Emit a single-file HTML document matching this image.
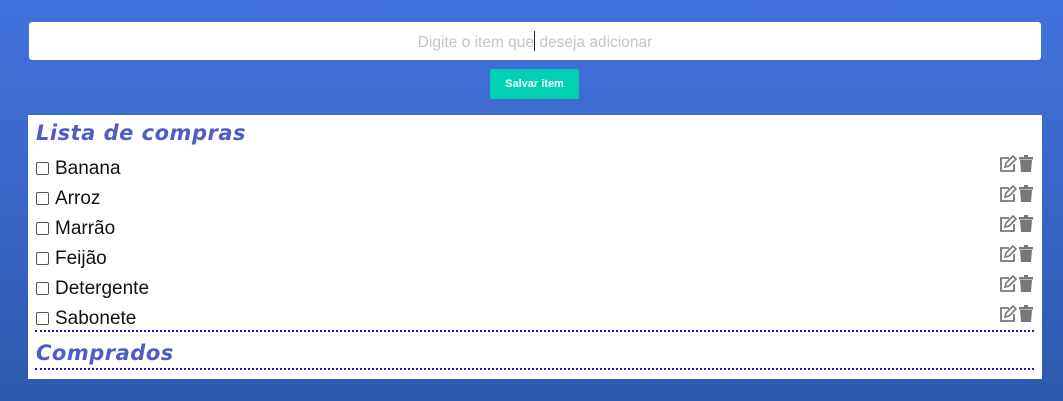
<!DOCTYPE html>
<html><head><style>
body{margin:0;width:1063px;height:401px;overflow:hidden;background:linear-gradient(#4472de,#2d59ac);font-family:"Liberation Sans",sans-serif;position:relative}
.inp{position:absolute;left:29px;top:22px;width:1012px;height:38px;background:#fff;border-radius:3px;text-align:center;line-height:42px;font-size:15.5px;color:#c9c2c8}
.btn{position:absolute;left:490px;top:69px;width:89px;height:30px;background:#00d1b2;border-radius:2px;color:#fff;font-weight:bold;font-size:11px;text-align:center;line-height:31px}
.panel{position:absolute;left:28px;top:115px;width:1014px;height:264px;background:#fff}
h2{position:absolute;left:8px;margin:0;font-family:"DejaVu Sans",sans-serif;font-style:italic;font-weight:bold;color:#4d5cc6;font-size:21px;letter-spacing:0.5px}
.row{position:absolute;left:8px;height:30px;width:998px;font-size:19px;color:#111;line-height:30px}
.cb{display:inline-block;width:11px;height:11px;border:1px solid #555;border-radius:2px;vertical-align:-1px;margin-right:6px}
.ic{position:absolute;right:0;top:1px}
.line{position:absolute;left:7px;width:999px;border-top:2px dotted #1515e0}
</style></head><body>
<div class="inp">Digite o item que<span style="display:inline-block;width:1px;height:20px;background:#222;vertical-align:-4px"></span> deseja adicionar</div>
<div class="btn">Salvar item</div>
<div class="panel">
<h2 style="top:6px">Lista de compras</h2>
<div class="row" style="top:39px"><span class="cb"></span>Banana<svg class="ic" width="36" height="18" viewBox="0 0 36 18"><path d="M11 3H3v13h13V9" fill="none" stroke="#777" stroke-width="1.8"/><path d="M7 12l1-4 7-7 3 3-7 7z" fill="none" stroke="#777" stroke-width="1.6"/><rect x="21" y="2" width="14" height="2.5" fill="#777"/><rect x="26" y="0" width="4" height="2" fill="#777"/><path d="M22 5h12l-1 12H23z" fill="#777"/></svg></div>
<div class="row" style="top:69px"><span class="cb"></span>Arroz<svg class="ic" width="36" height="18" viewBox="0 0 36 18"><path d="M11 3H3v13h13V9" fill="none" stroke="#777" stroke-width="1.8"/><path d="M7 12l1-4 7-7 3 3-7 7z" fill="none" stroke="#777" stroke-width="1.6"/><rect x="21" y="2" width="14" height="2.5" fill="#777"/><rect x="26" y="0" width="4" height="2" fill="#777"/><path d="M22 5h12l-1 12H23z" fill="#777"/></svg></div>
<div class="row" style="top:99px"><span class="cb"></span>Marrão<svg class="ic" width="36" height="18" viewBox="0 0 36 18"><path d="M11 3H3v13h13V9" fill="none" stroke="#777" stroke-width="1.8"/><path d="M7 12l1-4 7-7 3 3-7 7z" fill="none" stroke="#777" stroke-width="1.6"/><rect x="21" y="2" width="14" height="2.5" fill="#777"/><rect x="26" y="0" width="4" height="2" fill="#777"/><path d="M22 5h12l-1 12H23z" fill="#777"/></svg></div>
<div class="row" style="top:129px"><span class="cb"></span>Feijão<svg class="ic" width="36" height="18" viewBox="0 0 36 18"><path d="M11 3H3v13h13V9" fill="none" stroke="#777" stroke-width="1.8"/><path d="M7 12l1-4 7-7 3 3-7 7z" fill="none" stroke="#777" stroke-width="1.6"/><rect x="21" y="2" width="14" height="2.5" fill="#777"/><rect x="26" y="0" width="4" height="2" fill="#777"/><path d="M22 5h12l-1 12H23z" fill="#777"/></svg></div>
<div class="row" style="top:159px"><span class="cb"></span>Detergente<svg class="ic" width="36" height="18" viewBox="0 0 36 18"><path d="M11 3H3v13h13V9" fill="none" stroke="#777" stroke-width="1.8"/><path d="M7 12l1-4 7-7 3 3-7 7z" fill="none" stroke="#777" stroke-width="1.6"/><rect x="21" y="2" width="14" height="2.5" fill="#777"/><rect x="26" y="0" width="4" height="2" fill="#777"/><path d="M22 5h12l-1 12H23z" fill="#777"/></svg></div>
<div class="row" style="top:189px"><span class="cb"></span>Sabonete<svg class="ic" width="36" height="18" viewBox="0 0 36 18"><path d="M11 3H3v13h13V9" fill="none" stroke="#777" stroke-width="1.8"/><path d="M7 12l1-4 7-7 3 3-7 7z" fill="none" stroke="#777" stroke-width="1.6"/><rect x="21" y="2" width="14" height="2.5" fill="#777"/><rect x="26" y="0" width="4" height="2" fill="#777"/><path d="M22 5h12l-1 12H23z" fill="#777"/></svg></div>
<div class="line" style="top:215px"></div>
<h2 style="top:226px">Comprados</h2>
<div class="line" style="top:253px"></div>
</div>
</body></html>
